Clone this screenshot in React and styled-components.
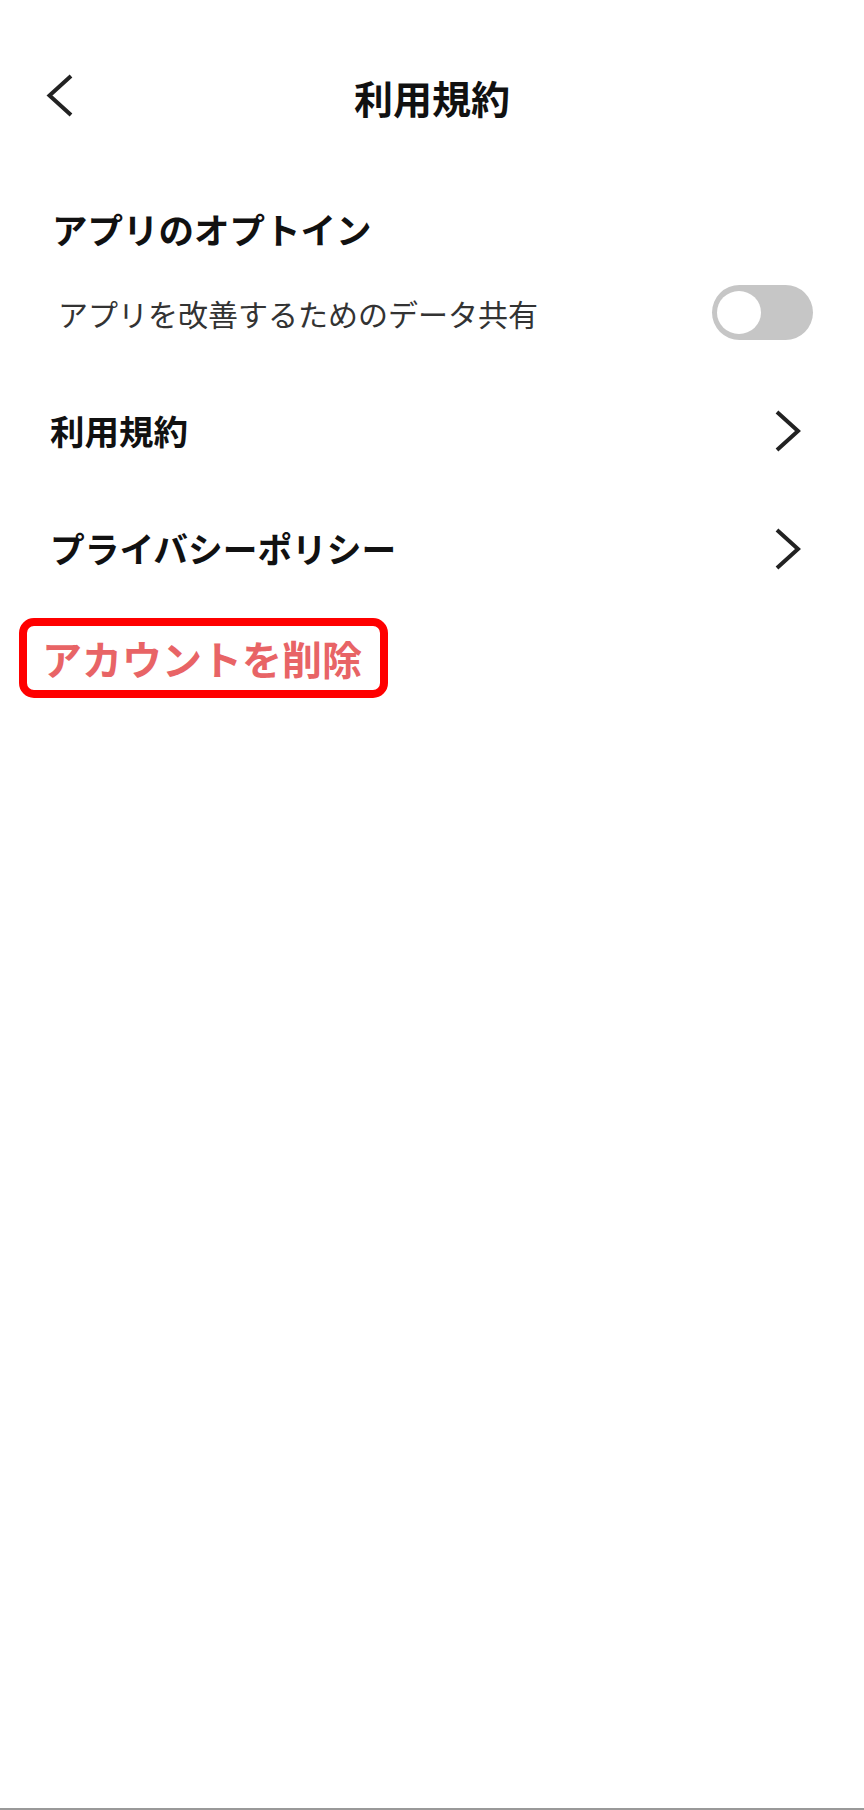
import React, { useState } from "react";
import styled, { createGlobalStyle } from "styled-components";

const Global = createGlobalStyle`
  html, body {
    margin: 0;
    padding: 0;
    background: #fff;
  }
  body {
    font-family: "Noto Sans CJK JP", "Noto Sans", sans-serif;
    color: #111;
  }
`;

const Page = styled.div`
  width: 864px;
  height: 1810px;
  box-sizing: border-box;
  display: flex;
  flex-direction: column;
`;

const Header = styled.header`
  margin-top: 48px;
  height: 100px;
  padding: 0 46px;
  display: grid;
  grid-template-columns: 1fr auto 1fr;
  align-items: center;
`;

const BackButton = styled.button`
  justify-self: start;
  align-self: start;
  margin-top: 26px;
  border: none;
  background: none;
  padding: 0;
  width: 27px;
  height: 43px;
  display: flex;
  cursor: pointer;
`;

const Title = styled.h1`
  margin: 0 0 2px;
  font-size: 39px;
  line-height: 1;
  font-weight: 700;
  color: #111;
`;

const SectionTitle = styled.h2`
  margin: 63px 0 0;
  padding-left: 52px;
  font-size: 35.5px;
  line-height: 1;
  font-weight: 700;
  color: #111;
`;

const ToggleRow = styled.div`
  margin-top: 38px;
  height: 56px;
  padding: 0 51px 0 58px;
  display: flex;
  align-items: center;
  justify-content: space-between;
`;

const ToggleLabel = styled.span`
  font-size: 30px;
  line-height: 1;
  color: #333;
`;

const Track = styled.button`
  position: relative;
  width: 101px;
  height: 55px;
  border: none;
  border-radius: 28px;
  padding: 0;
  background: ${(p) => (p.$on ? "#4caf50" : "#c6c6c6")};
  cursor: pointer;
`;

const Thumb = styled.span`
  position: absolute;
  top: 6px;
  left: ${(p) => (p.$on ? "52px" : "5px")};
  width: 44px;
  height: 43px;
  border-radius: 50%;
  background: #fff;
`;

const LinkList = styled.div`
  margin-top: 31px;
  display: flex;
  flex-direction: column;
`;

const LinkRow = styled.a`
  height: 118px;
  padding: 0 63px 0 50px;
  display: flex;
  align-items: center;
  justify-content: space-between;
  text-decoration: none;
  color: #111;
`;

const LinkLabel = styled.span`
  font-size: ${(p) => p.$size || 34}px;
  line-height: 1;
  font-weight: 700;
`;

const DeleteButton = styled.button`
  align-self: flex-start;
  margin: 10px 0 0 19px;
  height: 80px;
  box-sizing: border-box;
  padding: 0 18px 0 15px;
  border: 8px solid #ff0000;
  border-radius: 15px;
  background: #fff;
  font-family: "Noto Sans CJK JP", "Noto Sans", sans-serif;
  font-size: 40px;
  line-height: 1;
  font-weight: 600;
  color: #e86466;
  cursor: pointer;
`;

const BottomLine = styled.div`
  margin-top: auto;
  height: 2px;
  background: #999;
`;

function ChevronLeft() {
  return (
    <svg width="27" height="43" viewBox="0 0 27 43">
      <polyline
        points="25,2 3.5,21.5 25,41"
        fill="none"
        stroke="#222"
        strokeWidth="4"
      />
    </svg>
  );
}

function ChevronRight() {
  return (
    <svg width="26" height="42" viewBox="0 0 26 42">
      <polyline
        points="2,2 23,21 2,40"
        fill="none"
        stroke="#222"
        strokeWidth="4"
      />
    </svg>
  );
}

export default function App() {
  const [share, setShare] = useState(false);
  return (
    <Page>
      <Global />
      <Header>
        <BackButton aria-label="戻る">
          <ChevronLeft />
        </BackButton>
        <Title>利用規約</Title>
        <span />
      </Header>

      <SectionTitle>アプリのオプトイン</SectionTitle>
      <ToggleRow>
        <ToggleLabel>アプリを改善するためのデータ共有</ToggleLabel>
        <Track $on={share} onClick={() => setShare(!share)}>
          <Thumb $on={share} />
        </Track>
      </ToggleRow>

      <LinkList>
        <LinkRow>
          <LinkLabel $size={34.5}>利用規約</LinkLabel>
          <ChevronRight />
        </LinkRow>
        <LinkRow>
          <LinkLabel $size={34.7}>プライバシーポリシー</LinkLabel>
          <ChevronRight />
        </LinkRow>
      </LinkList>

      <DeleteButton>アカウントを削除</DeleteButton>

      <BottomLine />
    </Page>
  );
}
